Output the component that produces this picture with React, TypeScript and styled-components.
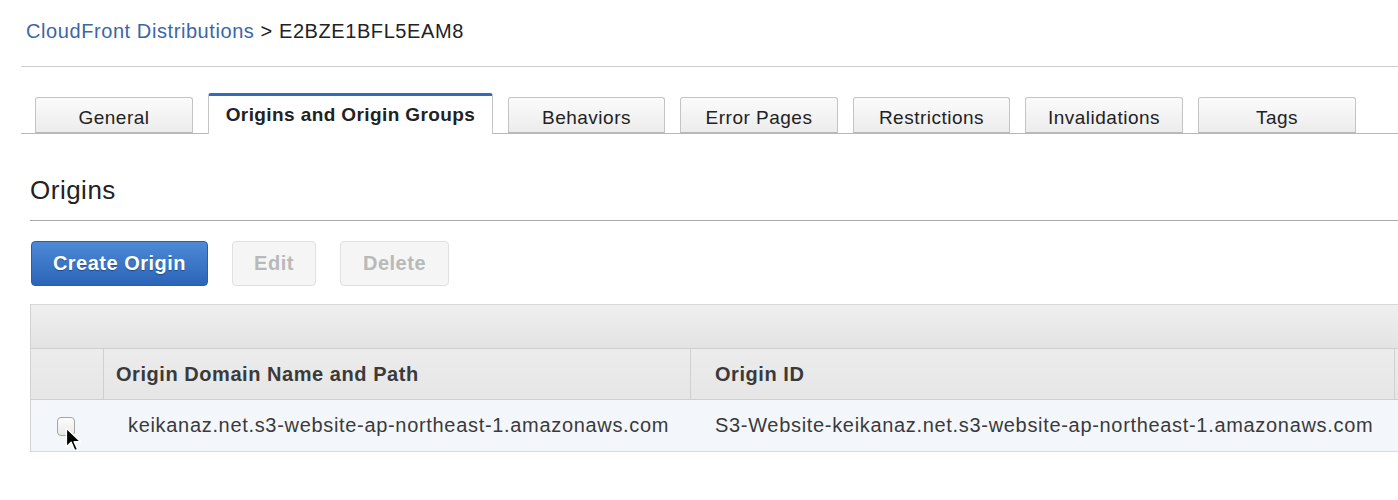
import React from "react";
import styled, { createGlobalStyle } from "styled-components";

const Global = createGlobalStyle`
  html, body { margin: 0; padding: 0; background: #fff; overflow: hidden; }
  body { font-family: "Liberation Sans", Arial, Helvetica, sans-serif; color: #222; letter-spacing: 0.5px; }
`;

const Page = styled.div`
  width: 1398px;
  height: 500px;
  padding-left: 21px;
  box-sizing: border-box;
  overflow: hidden;
`;

const Breadcrumb = styled.div`
  height: 67px;
  box-sizing: border-box;
  padding: 19px 0 0 5px;
  font-size: 20px;
  letter-spacing: 0.58px;
  line-height: 24px;
  color: #222;
  border-bottom: 1px solid #cfcfcf;
`;

const Crumb = styled.a`
  color: #3b66a8;
  text-decoration: none;
`;

const TabBar = styled.div`
  display: flex;
  align-items: flex-end;
  gap: 15px;
  margin-top: 26px;
  padding-left: 14px;
  height: 40px;
  border-bottom: 1px solid #b8b8b8;
`;

const Tab = styled.div<{ $active?: boolean; $w: number }>`
  width: ${(p) => p.$w}px;
  box-sizing: border-box;
  height: ${(p) => (p.$active ? 41 : 36)}px;
  margin-bottom: ${(p) => (p.$active ? -1 : 0)}px;
  display: flex;
  align-items: center;
  justify-content: center;
  font-size: 19px;
  letter-spacing: ${(p) => (p.$active ? 0.4 : 0.5)}px;
  font-weight: ${(p) => (p.$active ? 700 : 400)};
  color: #222;
  border: 1px solid #c4c4c4;
  border-bottom: ${(p) => (p.$active ? "none" : "1px solid #b8b8b8")};
  border-top: ${(p) => (p.$active ? "3px solid #2f6bbf" : "1px solid #c4c4c4")};
  border-radius: 3px 3px 0 0;
  background: ${(p) =>
    p.$active ? "#fff" : "linear-gradient(#fbfbfb, #ececec)"};
  padding-top: ${(p) => (p.$active ? 0 : 5)}px;
`;

const Section = styled.div`
  padding-left: 9px;
`;

const Heading = styled.h2`
  margin: 0;
  margin-top: 40px;
  padding-bottom: 14px;
  font-size: 26px;
  line-height: 32px;
  font-weight: 400;
  color: #222;
  border-bottom: 1px solid #a8a8a8;
`;

const Toolbar = styled.div`
  display: flex;
  gap: 24px;
  margin-top: 20px;
  padding-left: 1px;
`;

const Button = styled.button<{ $primary?: boolean; $w: number }>`
  width: ${(p) => p.$w}px;
  height: 45px;
  box-sizing: border-box;
  border-radius: 4px;
  font-family: inherit;
  font-size: 20px;
  letter-spacing: 0.5px;
  font-weight: 700;
  padding: 0;
  cursor: pointer;
  ${(p) =>
    p.$primary
      ? `
    color: #fff;
    background: linear-gradient(#4d8ad6, #2b64b8);
    border: 1px solid #2a5fa8;
    text-shadow: 0 1px 1px rgba(0,0,0,0.35);
  `
      : `
    color: #b9b9b9;
    background: #f5f5f5;
    border: 1px solid #e0e0e0;
  `}
`;

const Table = styled.div`
  margin-top: 18px;
  width: 1410px;
  border-left: 1px solid #d2d2d2;
`;

const TopBar = styled.div`
  height: 43px;
  background: linear-gradient(#efefef, #e3e3e3);
  border-top: 1px solid #d6d6d6;
  border-bottom: 1px solid #cfcfcf;
`;

const Row = styled.div<{ $head?: boolean }>`
  display: grid;
  grid-template-columns: 73px 587px 704px 1fr;
  height: ${(p) => (p.$head ? 50 : 51)}px;
  background: ${(p) =>
    p.$head ? "linear-gradient(#ececec, #e6e6e6)" : "#f3f7fb"};
  border-bottom: 1px solid ${(p) => (p.$head ? "#cfcfcf" : "#d9d9d9")};
`;

const Cell = styled.div<{ $head?: boolean; $pad: number }>`
  display: flex;
  align-items: center;
  padding-left: ${(p) => p.$pad}px;
  font-size: 20px;
  letter-spacing: ${(p) => (p.$head ? 0.55 : 0.68)}px;
  font-weight: ${(p) => (p.$head ? 700 : 400)};
  color: #3a3a3a;
  white-space: nowrap;
  overflow: hidden;
  border-right: ${(p) => (p.$head ? "1px solid #d0d0d0" : "none")};
  position: relative;
`;

const Check = styled.span`
  width: 18px;
  height: 19px;
  margin-left: 26px;
  margin-top: 1px;
  border: 1.5px solid #a4a4a4;
  border-radius: 4px;
  background: linear-gradient(#fdfdfd, #e9e9e9);
  box-sizing: border-box;
`;

const Pointer = styled.svg`
  position: absolute;
  left: 34px;
  top: 27px;
`;

const tabs = [
  { label: "General", w: 158 },
  { label: "Origins and Origin Groups", w: 285, active: true },
  { label: "Behaviors", w: 157 },
  { label: "Error Pages", w: 158 },
  { label: "Restrictions", w: 157 },
  { label: "Invalidations", w: 158 },
  { label: "Tags", w: 158 },
];

export default function App() {
  return (
    <Page>
      <Global />
      <Breadcrumb>
        <Crumb href="#">CloudFront Distributions</Crumb> &gt; E2BZE1BFL5EAM8
      </Breadcrumb>
      <TabBar>
        {tabs.map((t) => (
          <Tab key={t.label} $active={t.active} $w={t.w}>
            {t.label}
          </Tab>
        ))}
      </TabBar>
      <Section>
        <Heading>Origins</Heading>
        <Toolbar>
          <Button $primary $w={177}>Create Origin</Button>
          <Button $w={84}>Edit</Button>
          <Button $w={109}>Delete</Button>
        </Toolbar>
        <Table>
          <TopBar />
          <Row $head>
            <Cell $head $pad={0} />
            <Cell $head $pad={12}>Origin Domain Name and Path</Cell>
            <Cell $head $pad={24}>Origin ID</Cell>
            <Cell $head $pad={12} />
          </Row>
          <Row>
            <Cell $pad={0}>
              <Check />
              <Pointer width="17" height="26" viewBox="0 0 14 22">
                <path
                  d="M1 1 L1 17 L5 13 L8 20 L10.5 19 L7.5 12.5 L13 12.5 Z"
                  fill="#000"
                  stroke="#fff"
                  strokeWidth="1.2"
                  strokeLinejoin="round"
                />
              </Pointer>
            </Cell>
            <Cell $pad={24}>keikanaz.net.s3-website-ap-northeast-1.amazonaws.com</Cell>
            <Cell $pad={24}>S3-Website-keikanaz.net.s3-website-ap-northeast-1.amazonaws.com</Cell>
            <Cell $pad={12} />
          </Row>
        </Table>
      </Section>
    </Page>
  );
}
